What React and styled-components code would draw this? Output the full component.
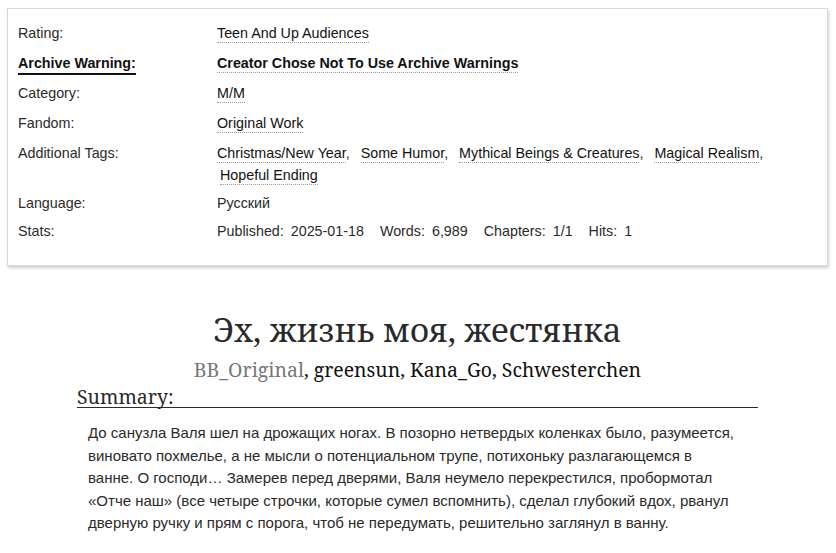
import React from 'react'
import styled, { createGlobalStyle } from 'styled-components'

const Global = createGlobalStyle`
  body {
    margin: 0;
    background: #fff;
    color: #2a2a2a;
    font-family: "Liberation Sans", Arial, sans-serif;
  }
`

const Page = styled.div`
  width: 836px;
  padding: 8px 8px 0 7px;
  box-sizing: border-box;
`

const MetaBox = styled.dl`
  margin: 0;
  border: 1px solid #d8d8d8;
  box-shadow: 1px 2px 3px #cfcfcf;
  padding: 9px 10px 19px 10px;
  display: grid;
  grid-template-columns: 199px 1fr;
  font-size: 14.3px;
`

const Label = styled.dt`
  line-height: 22px;
  padding-top: 4px;
  font-weight: ${p => (p.strong ? 700 : 400)};
  color: ${p => (p.strong ? '#111' : '#2a2a2a')};
  span {
    border-bottom: ${p => (p.strong ? '2px solid #111' : 'none')};
    padding-bottom: 2px;
  }
`

const Value = styled.dd`
  margin: 0;
  line-height: 22px;
  padding: 4px 0 ${p => (p.tight ? '2px' : '4px')};
  font-weight: ${p => (p.strong ? 700 : 400)};
  color: ${p => (p.strong ? '#111' : '#2a2a2a')};
`

const Tag = styled.a`
  color: #111;
  text-decoration: none;
  border-bottom: 1px dotted #999;
  padding-bottom: 1px;
  white-space: nowrap;
  margin-left: ${p => (p.first ? '0' : '3px')};
`

const Sep = styled.span`
  margin-right: 4px;
`

const StatName = styled.span`
  margin-right: 7px;
`

const StatValue = styled.span`
  margin-right: 16px;
`

const Work = styled.div`
  padding: 40px 70px 0 70px;
`

const Title = styled.h2`
  margin: 0;
  text-align: center;
  font-family: "Noto Serif", "DejaVu Serif", serif;
  font-weight: 400;
  font-size: 33px;
  line-height: 48px;
  color: #2a2a2a;
`

const Byline = styled.h3`
  margin: 3px 0 0;
  text-align: center;
  font-family: "Noto Serif", "DejaVu Serif", serif;
  font-weight: 400;
  font-size: 19.4px;
  line-height: 26px;
  color: #111;
`

const Author = styled.a`
  color: ${p => (p.muted ? '#777' : '#111')};
  text-decoration: none;
`

const SummaryHead = styled.h3`
  margin: 4px 0 0;
  font-family: "Noto Serif", "DejaVu Serif", serif;
  font-weight: 400;
  font-size: 19.5px;
  line-height: 20px;
  color: #2a2a2a;
  border-bottom: 1px solid #2a2a2a;
`

const Summary = styled.blockquote`
  margin: 14px 22px 0 11px;
  font-size: 15px;
  line-height: 22.5px;
  color: #2a2a2a;
  p { margin: 0; }
`

const tags = [
  'Christmas/New Year',
  'Some Humor',
  'Mythical Beings & Creatures',
  'Magical Realism',
  'Hopeful Ending',
]

export default function App() {
  return (
    <Page>
      <Global />
      <MetaBox>
        <Label><span>Rating:</span></Label>
        <Value><Tag first>Teen And Up Audiences</Tag></Value>
        <Label strong><span>Archive Warning:</span></Label>
        <Value strong><Tag first>Creator Chose Not To Use Archive Warnings</Tag></Value>
        <Label><span>Category:</span></Label>
        <Value><Tag first>M/M</Tag></Value>
        <Label><span>Fandom:</span></Label>
        <Value><Tag first>Original Work</Tag></Value>
        <Label><span>Additional Tags:</span></Label>
        <Value tight>
          {tags.map((t, i) => (
            <React.Fragment key={t}>
              <Tag first={i === 0}>{t}</Tag>
              {i < tags.length - 1 && <Sep>,</Sep>}{' '}
            </React.Fragment>
          ))}
        </Value>
        <Label><span>Language:</span></Label>
        <Value tight>Русский</Value>
        <Label><span>Stats:</span></Label>
        <Value>
          <StatName>Published:</StatName><StatValue>2025-01-18</StatValue>
          <StatName>Words:</StatName><StatValue>6,989</StatValue>
          <StatName>Chapters:</StatName><StatValue>1/1</StatValue>
          <StatName>Hits:</StatName><StatValue>1</StatValue>
        </Value>
      </MetaBox>
      <Work>
        <Title>Эх, жизнь моя, жестянка</Title>
        <Byline>
          <Author muted>BB_Original</Author>, <Author>greensun</Author>, <Author>Kana_Go</Author>, <Author>Schwesterchen</Author>
        </Byline>
        <SummaryHead>Summary:</SummaryHead>
        <Summary>
          <p>
            До санузла Валя шел на дрожащих ногах. В позорно нетвердых коленках было, разумеется, виновато похмелье, а не мысли о потенциальном трупе, потихоньку разлагающемся в ванне. О господи… Замерев перед дверями, Валя неумело перекрестился, пробормотал «Отче наш» (все четыре строчки, которые сумел вспомнить), сделал глубокий вдох, рванул дверную ручку и прям с порога, чтоб не передумать, решительно заглянул в ванну.
          </p>
        </Summary>
      </Work>
    </Page>
  )
}
